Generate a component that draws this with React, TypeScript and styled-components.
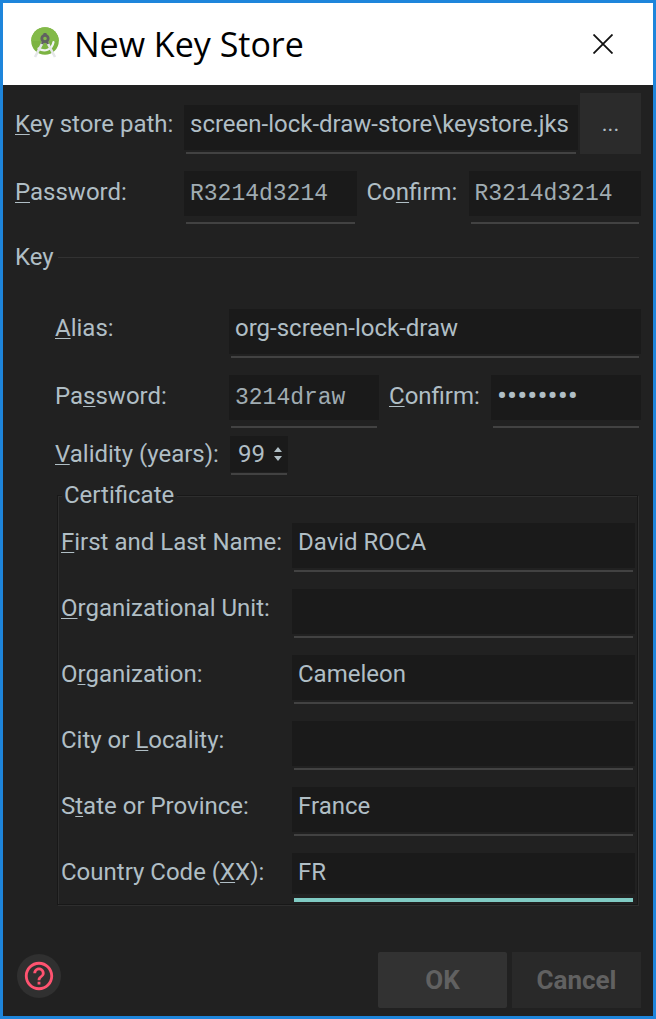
import React, { useId } from "react";
import styled, { createGlobalStyle } from "styled-components";

const color = {
  frame: "#1e85db",
  background: "#212121",
  input: "#1a1a1a",
  line: "#424242",
  divider: "#323232",
  text: "#b0bec5",
  code: "#a0acb2",
  accent: "#80cbc4",
  disabled: "#616161",
  help: "#ff5370",
};

const GlobalStyle = createGlobalStyle`
  *, *::before, *::after { box-sizing: border-box; }
  body { margin: 0; background: ${color.background}; }
`;

const Dialog = styled.main`
  min-height: 100vh;
  display: flex;
  flex-direction: column;
  border: 3px solid ${color.frame};
  background: ${color.background};
  color: ${color.text};
  font: 24px/28px Roboto, "Liberation Sans", sans-serif;
`;

const TitleBar = styled.header`
  display: flex;
  align-items: center;
  height: 82px;
  padding: 0 40px 0 27px;
  background: #fff;
  color: #000;
`;

const Title = styled.h1`
  flex: 1;
  margin: 0 0 0 14px;
  font: 400 34px/48px "Open Sans", "Noto Sans", sans-serif;
`;

const CloseButton = styled.button`
  display: flex;
  padding: 0;
  border: 0;
  background: none;
  color: #111;
`;

const Form = styled.form`
  flex: 1;
  display: flex;
  flex-direction: column;
  padding: 8px 12px;
`;

const Row = styled.div<{ $gap?: number }>`
  display: flex;
  align-items: flex-start;
  margin-top: ${(p) => p.$gap ?? 17}px;
`;

const PathRow = styled(Row)`
  align-items: center;
`;

const Label = styled.label<{ $width: number; $line?: number; $indent?: number }>`
  flex: none;
  width: ${(p) => p.$width}px;
  padding-left: ${(p) => p.$indent ?? 0}px;
  line-height: ${(p) => p.$line ?? 38}px;
  white-space: nowrap;
`;

const Mnemonic = styled.u`
  text-decoration-thickness: 1px;
  text-underline-offset: 2px;
  text-decoration-skip-ink: none;
`;

const Field = styled.div<{ $gap?: number }>`
  flex: 1;
  min-width: 0;
  &::after {
    content: "";
    display: block;
    height: 2px;
    margin: ${(p) => p.$gap ?? 2}px 2px 0;
    background: ${color.line};
  }
`;

const PathField = styled(Field)`
  align-self: flex-end;
  margin-right: 2px;
`;

const ActiveField = styled(Field)`
  &::after {
    height: 4px;
    background: ${color.accent};
  }
`;

const Input = styled.input`
  display: block;
  width: 100%;
  height: 45px;
  padding: 0 6px 7px;
  border: 0;
  border-radius: 0;
  outline: 0;
  background: ${color.input};
  color: inherit;
  font: inherit;
`;

const ActiveInput = styled(Input)`
  height: 41px;
  padding-bottom: 3px;
`;

const CodeInput = styled(Input)`
  padding-bottom: 0;
  color: ${color.code};
  font: 23px "Liberation Mono", monospace;
`;

const MaskedInput = styled(Input)`
  padding-bottom: 5px;
  font-size: 30px;
`;

const BrowseButton = styled.button`
  width: 61px;
  height: 61px;
  padding: 0;
  border: 0;
  background: #2b2b2b;
  color: ${color.text};
  font: 22px/28px Roboto, sans-serif;
`;

const SectionHeading = styled.div`
  display: flex;
  align-items: center;
  gap: 4px;
  margin: 19px 2px 0 0;
  &::after {
    content: "";
    flex: 1;
    height: 1px;
    background: ${color.divider};
  }
`;

const SectionTitle = styled.h2`
  margin: 0;
  font: inherit;
`;

const Section = styled.section`
  padding-left: 40px;
`;

const Spinner = styled.div`
  width: 58px;
  margin-left: 1px;
  &::after {
    content: "";
    display: block;
    height: 2px;
    margin: 1px 1px 0;
    background: ${color.line};
  }
`;

const SpinnerBox = styled.div`
  display: flex;
  align-items: center;
  height: 36px;
  padding: 0 6px 0 8px;
  background: ${color.input};
`;

const SpinnerInput = styled.input`
  flex: 1;
  min-width: 0;
  height: 36px;
  padding: 0;
  border: 0;
  outline: 0;
  background: none;
  color: inherit;
  font: inherit;
  appearance: textfield;
  &::-webkit-inner-spin-button { display: none; }
`;

/* Etched frame: a dark line with a lighter one just below and right of it. */
const Certificate = styled.fieldset`
  min-width: 0;
  margin: 6px 3px 0 2px;
  padding: 14px 2px 2px 3px;
  border: 1px solid #181818;
  box-shadow: 1px 1px 0 #2e2e2e, inset 1px 1px 0 #2e2e2e;
`;

const Legend = styled.legend`
  margin-left: 1px;
  padding: 0 3px 0 2px;
  background: ${color.background};
`;

const Footer = styled.footer`
  display: flex;
  align-items: flex-start;
  gap: 5px;
  margin-top: auto;
  padding-top: 40px;
`;

const HelpButton = styled.button`
  display: flex;
  align-items: center;
  justify-content: center;
  width: 44px;
  height: 44px;
  margin: 2px auto 0 2px;
  padding: 0;
  border: 0;
  border-radius: 50%;
  background: #303030;
  color: ${color.help};
`;

const ActionButton = styled.button<{ $primary?: boolean }>`
  width: 129px;
  height: 56px;
  padding: 0;
  border: 0;
  border-radius: ${(p) => (p.$primary ? 2 : 0)}px;
  background: ${(p) => (p.$primary ? "#323232" : "#292929")};
  color: ${color.disabled};
  font: 700 26px/32px Roboto, sans-serif;
`;

/** Label text in which the letter after "&" is the underlined access key. */
function LabelText({ text }: { text: string }) {
  const at = text.indexOf("&");
  return (
    <>
      {text.slice(0, at)}
      <Mnemonic>{text[at + 1]}</Mnemonic>
      {text.slice(at + 2)}
    </>
  );
}

function PasswordPair(props: {
  width: number;
  label: string;
  value: string;
  confirmLabel: string;
  confirmValue: string;
  masked?: boolean;
}) {
  const id = useId();
  return (
    <Row>
      <Label $width={props.width} $line={42} htmlFor={id}>
        <LabelText text={props.label} />
      </Label>
      <Field $gap={6}>
        <CodeInput id={id} defaultValue={props.value} />
      </Field>
      <Label $width={112} $line={42} $indent={10} htmlFor={id + "c"}>
        <LabelText text={props.confirmLabel} />
      </Label>
      <Field $gap={6}>
        {props.masked ? (
          <MaskedInput type="password" id={id + "c"} defaultValue={props.confirmValue} />
        ) : (
          <CodeInput id={id + "c"} defaultValue={props.confirmValue} />
        )}
      </Field>
    </Row>
  );
}

const certificateFields = [
  { label: "&First and Last Name:", value: "David ROCA" },
  { label: "&Organizational Unit:", value: "" },
  { label: "O&rganization:", value: "Cameleon" },
  { label: "City or &Locality:", value: "" },
  { label: "S&tate or Province:", value: "France" },
  { label: "Country Code (&XX):", value: "FR", active: true },
];

function StudioLogo() {
  return (
    <svg width="30" height="34" viewBox="0 0 30 34" fill="none" aria-hidden="true">
      <circle cx="15" cy="14" r="13.8" fill="#7cb342" />
      <path d="M1.2 14a13.8 13.8 0 0 1 27.6 0z" fill="#83ba49" />
      <path d="M8.5 21.5C14 25 22 23.500 23.500 15" stroke="#f1f3f4" strokeWidth="2.2" strokeLinecap="round" />
      <path d="M13.500 14 5 30M16.500 14l8.500 16" stroke="#e4e6e8" strokeWidth="2.6" />
      <path d="m13.500 14-1.500 3M16.500 14l1.500 3" stroke="#616161" strokeWidth="2.6" />
      <circle cx="15" cy="11.5" r="3.2" stroke="#616161" strokeWidth="2.8" />
      <path d="M15 6v3" stroke="#616161" strokeWidth="3" />
    </svg>
  );
}

export default function App() {
  return (
    <>
      <GlobalStyle />
      <Dialog>
        <TitleBar>
          <StudioLogo />
          <Title>New Key Store</Title>
          <CloseButton type="button" aria-label="Close">
            <svg width="20" height="20" viewBox="0 0 20 20" stroke="currentColor" strokeWidth="1.8">
              <path d="M.5.5l19 19M19.500.5l-19 19" />
            </svg>
          </CloseButton>
        </TitleBar>
        <Form>
          <PathRow $gap={0}>
            <Label $width={169} htmlFor="path">
              <LabelText text="&Key store path:" />
            </Label>
            <PathField>
              <Input id="path" defaultValue="screen-lock-draw-store\keystore.jks" />
            </PathField>
            <BrowseButton type="button" aria-label="Browse">...</BrowseButton>
          </PathRow>
          <PasswordPair
            width={169}
            label="&Password:"
            value="R3214d3214"
            confirmLabel="Co&nfirm:"
            confirmValue="R3214d3214"
          />
          <SectionHeading>
            <SectionTitle>Key</SectionTitle>
          </SectionHeading>
          <Section>
            <Row $gap={38}>
              <Label $width={174} htmlFor="alias">
                <LabelText text="&Alias:" />
              </Label>
              <Field>
                <Input id="alias" defaultValue="org-screen-lock-draw" />
              </Field>
            </Row>
            <PasswordPair
              width={174}
              label="Pa&ssword:"
              value="3214draw"
              confirmLabel="&Confirm:"
              confirmValue="3214draw"
              masked
            />
            <Row $gap={8}>
              <Label $width={174} $line={36} htmlFor="validity">
                <LabelText text="&Validity (years):" />
              </Label>
              <Spinner>
                <SpinnerBox>
                  <SpinnerInput type="number" id="validity" defaultValue={99} />
                  <svg width="8" height="14" viewBox="0 0 8 14" fill={color.text} aria-hidden="true">
                    <path d="M0 5 4 0l4 5zM0 9h8l-4 5z" />
                  </svg>
                </SpinnerBox>
              </Spinner>
            </Row>
            <Certificate>
              <Legend>Certificate</Legend>
              {certificateFields.map((field, i) => {
                const Wrap = field.active ? ActiveField : Field;
                const Control = field.active ? ActiveInput : Input;
                return (
                  <Row key={field.label} $gap={i ? 17 : 0}>
                    <Label $width={231} htmlFor={"cert" + i}>
                      <LabelText text={field.label} />
                    </Label>
                    <Wrap $gap={field.active ? 4 : 2}>
                      <Control id={"cert" + i} defaultValue={field.value} />
                    </Wrap>
                  </Row>
                );
              })}
            </Certificate>
          </Section>
          <Footer>
            <HelpButton type="button" aria-label="Help">
              <svg width="34" height="34" viewBox="0 0 24 24" fill="currentColor">
                <path d="M11 18h2v-2h-2v2zm1-16C6.480 2 2 6.480 2 12s4.480 10 10 10 10-4.480 10-10S17.520 2 12 2zm0 18c-4.410 0-8-3.590-8-8s3.590-8 8-8 8 3.590 8 8-3.590 8-8 8zm0-14c-2.210 0-4 1.790-4 4h2c0-1.100.9-2 2-2s2 .9 2 2c0 2-3 1.750-3 5h2c0-2.250 3-2.500 3-5 0-2.210-1.790-4-4-4z" />
              </svg>
            </HelpButton>
            <ActionButton type="submit" $primary>OK</ActionButton>
            <ActionButton type="button">Cancel</ActionButton>
          </Footer>
        </Form>
      </Dialog>
    </>
  );
}
